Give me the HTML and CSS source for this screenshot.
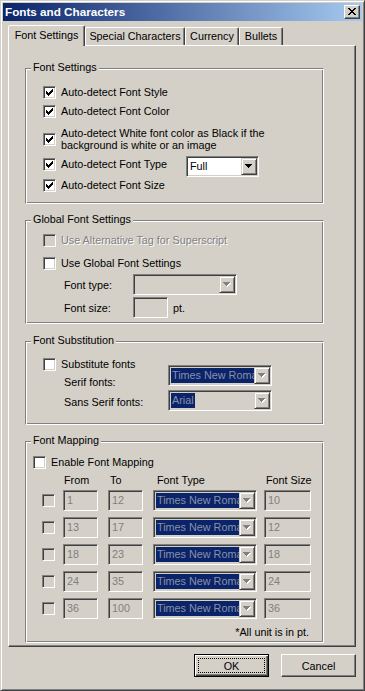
FILE: index.html
```html
<!DOCTYPE html>
<html>
<head>
<meta charset="utf-8">
<title>Fonts and Characters</title>
<link rel="stylesheet" href="styles.css">
</head>
<body>
<div class="window">
  <div class="titlebar">
    <span class="title">Fonts and Characters</span>
    <span class="caption-btn"><svg width="8" height="7" viewBox="0 0 8 7"><path d="M0 0h2v1H0zM6 0h2v1H6zM1 1h2v1H1zM5 1h2v1H5zM2 2h4v1H2zM3 3h2v1H3zM2 4h4v1H2zM1 5h2v1H1zM5 5h2v1H5zM0 6h2v1H0zM6 6h2v1H6z" fill="#000"/></svg></span>
  </div>

  <div class="tabs">
    <div class="tab active tab-a">Font Settings</div>
    <div class="tab tab-b">Special Characters</div>
    <div class="tab tab-c">Currency</div>
    <div class="tab tab-d">Bullets</div>
  </div>

  <div class="panel">
    <!-- Font Settings -->
    <div class="group g1">
      <span class="group-title">Font Settings</span>
      <div class="check-row">
        <span class="cb"><svg width="7" height="7" viewBox="0 0 7 7"><path d="M6 0h1v1H6zM5 1h2v1H5zM0 2h1v1H0zM4 2h3v1H4zM0 3h2v1H0zM3 3h3v1H3zM0 4h5v1H0zM1 5h3v1H1zM2 6h1v1H2z" fill="#000"/></svg></span>
        <span>Auto-detect Font Style</span>
      </div>
      <div class="check-row g1-r2">
        <span class="cb"><svg width="7" height="7" viewBox="0 0 7 7"><path d="M6 0h1v1H6zM5 1h2v1H5zM0 2h1v1H0zM4 2h3v1H4zM0 3h2v1H0zM3 3h3v1H3zM0 4h5v1H0zM1 5h3v1H1zM2 6h1v1H2z" fill="#000"/></svg></span>
        <span>Auto-detect Font Color</span>
      </div>
      <div class="check-row g1-r3">
        <span class="cb"><svg width="7" height="7" viewBox="0 0 7 7"><path d="M6 0h1v1H6zM5 1h2v1H5zM0 2h1v1H0zM4 2h3v1H4zM0 3h2v1H0zM3 3h3v1H3zM0 4h5v1H0zM1 5h3v1H1zM2 6h1v1H2z" fill="#000"/></svg></span>
        <span class="two-line">Auto-detect White font color as Black if the<br>background is white or an image</span>
      </div>
      <div class="check-row g1-r4">
        <span class="cb"><svg width="7" height="7" viewBox="0 0 7 7"><path d="M6 0h1v1H6zM5 1h2v1H5zM0 2h1v1H0zM4 2h3v1H4zM0 3h2v1H0zM3 3h3v1H3zM0 4h5v1H0zM1 5h3v1H1zM2 6h1v1H2z" fill="#000"/></svg></span>
        <span class="type-label">Auto-detect Font Type</span>
        <div class="combo combo-full">
          <span class="combo-val plain">Full</span>
          <span class="combo-btn"><svg width="7" height="4" viewBox="0 0 7 4"><path d="M0 0h7v1H0zM1 1h5v1H1zM2 2h3v1H2zM3 3h1v1H3z" fill="#000"/></svg></span>
        </div>
      </div>
      <div class="check-row g1-r5">
        <span class="cb"><svg width="7" height="7" viewBox="0 0 7 7"><path d="M6 0h1v1H6zM5 1h2v1H5zM0 2h1v1H0zM4 2h3v1H4zM0 3h2v1H0zM3 3h3v1H3zM0 4h5v1H0zM1 5h3v1H1zM2 6h1v1H2z" fill="#000"/></svg></span>
        <span>Auto-detect Font Size</span>
      </div>
    </div>

    <!-- Global Font Settings -->
    <div class="group g2">
      <span class="group-title">Global Font Settings</span>
      <div class="check-row">
        <span class="cb disabled"></span>
        <span class="dis-text">Use Alternative Tag for Superscript</span>
      </div>
      <div class="check-row g2-r2">
        <span class="cb"></span>
        <span>Use Global Font Settings</span>
      </div>
      <div class="field-row g2-r3">
        <span class="field-label">Font type:</span>
        <div class="combo combo-type disabled">
          <span class="combo-val"></span>
          <span class="combo-btn"><svg width="8" height="5" viewBox="0 0 8 5"><path d="M1 1h7v1H1zM2 2h5v1H2zM3 3h3v1H3zM4 4h1v1H4z" fill="#fff"/><path d="M0 0h7v1H0zM1 1h5v1H1zM2 2h3v1H2zM3 3h1v1H3z" fill="#808080"/></svg></span>
        </div>
      </div>
      <div class="field-row g2-r4">
        <span class="field-label">Font size:</span>
        <span class="field w-size2"></span>
        <span class="pt">pt.</span>
      </div>
    </div>

    <!-- Font Substitution -->
    <div class="group g3">
      <span class="group-title">Font Substitution</span>
      <div class="sub-wrap">
        <div class="sub-left">
          <div class="check-row flush">
            <span class="cb"></span>
            <span>Substitute fonts</span>
          </div>
          <div class="sub-label l1">Serif fonts:</div>
          <div class="sub-label l2">Sans Serif fonts:</div>
        </div>
        <div class="sub-right">
          <div class="combo combo-sub s1 disabled">
            <span class="combo-val"><span class="sel">Times New Roman</span></span>
            <span class="combo-btn"><svg width="8" height="5" viewBox="0 0 8 5"><path d="M1 1h7v1H1zM2 2h5v1H2zM3 3h3v1H3zM4 4h1v1H4z" fill="#fff"/><path d="M0 0h7v1H0zM1 1h5v1H1zM2 2h3v1H2zM3 3h1v1H3z" fill="#808080"/></svg></span>
          </div>
          <div class="combo combo-sub s2 disabled">
            <span class="combo-val"><span class="sel">Arial</span></span>
            <span class="combo-btn"><svg width="8" height="5" viewBox="0 0 8 5"><path d="M1 1h7v1H1zM2 2h5v1H2zM3 3h3v1H3zM4 4h1v1H4z" fill="#fff"/><path d="M0 0h7v1H0zM1 1h5v1H1zM2 2h3v1H2zM3 3h1v1H3z" fill="#808080"/></svg></span>
          </div>
        </div>
      </div>
    </div>

    <!-- Font Mapping -->
    <div class="group g4">
      <span class="group-title">Font Mapping</span>
      <div class="check-row g4-enable">
        <span class="cb"></span>
        <span>Enable Font Mapping</span>
      </div>
      <div class="map-grid map-head">
        <span></span>
        <span class="h-from">From</span>
        <span class="h-to">To</span>
        <span class="h-type">Font Type</span>
        <span class="h-size">Font Size</span>
      </div>
      <div class="map-grid map-body">
        <span class="cb disabled"></span>
        <span class="field w-num">1</span>
        <span class="field w-num">12</span>
        <div class="combo combo-map disabled"><span class="combo-val"><span class="sel">Times New Roman</span></span><span class="combo-btn"><svg width="8" height="5" viewBox="0 0 8 5"><path d="M1 1h7v1H1zM2 2h5v1H2zM3 3h3v1H3zM4 4h1v1H4z" fill="#fff"/><path d="M0 0h7v1H0zM1 1h5v1H1zM2 2h3v1H2zM3 3h1v1H3z" fill="#808080"/></svg></span></div>
        <span class="field w-size">10</span>

        <span class="cb disabled"></span>
        <span class="field w-num">13</span>
        <span class="field w-num">17</span>
        <div class="combo combo-map disabled"><span class="combo-val"><span class="sel">Times New Roman</span></span><span class="combo-btn"><svg width="8" height="5" viewBox="0 0 8 5"><path d="M1 1h7v1H1zM2 2h5v1H2zM3 3h3v1H3zM4 4h1v1H4z" fill="#fff"/><path d="M0 0h7v1H0zM1 1h5v1H1zM2 2h3v1H2zM3 3h1v1H3z" fill="#808080"/></svg></span></div>
        <span class="field w-size">12</span>

        <span class="cb disabled"></span>
        <span class="field w-num">18</span>
        <span class="field w-num">23</span>
        <div class="combo combo-map disabled"><span class="combo-val"><span class="sel">Times New Roman</span></span><span class="combo-btn"><svg width="8" height="5" viewBox="0 0 8 5"><path d="M1 1h7v1H1zM2 2h5v1H2zM3 3h3v1H3zM4 4h1v1H4z" fill="#fff"/><path d="M0 0h7v1H0zM1 1h5v1H1zM2 2h3v1H2zM3 3h1v1H3z" fill="#808080"/></svg></span></div>
        <span class="field w-size">18</span>

        <span class="cb disabled"></span>
        <span class="field w-num">24</span>
        <span class="field w-num">35</span>
        <div class="combo combo-map disabled"><span class="combo-val"><span class="sel">Times New Roman</span></span><span class="combo-btn"><svg width="8" height="5" viewBox="0 0 8 5"><path d="M1 1h7v1H1zM2 2h5v1H2zM3 3h3v1H3zM4 4h1v1H4z" fill="#fff"/><path d="M0 0h7v1H0zM1 1h5v1H1zM2 2h3v1H2zM3 3h1v1H3z" fill="#808080"/></svg></span></div>
        <span class="field w-size">24</span>

        <span class="cb disabled"></span>
        <span class="field w-num">36</span>
        <span class="field w-num">100</span>
        <div class="combo combo-map disabled"><span class="combo-val"><span class="sel">Times New Roman</span></span><span class="combo-btn"><svg width="8" height="5" viewBox="0 0 8 5"><path d="M1 1h7v1H1zM2 2h5v1H2zM3 3h3v1H3zM4 4h1v1H4z" fill="#fff"/><path d="M0 0h7v1H0zM1 1h5v1H1zM2 2h3v1H2zM3 3h1v1H3z" fill="#808080"/></svg></span></div>
        <span class="field w-size">36</span>
      </div>
      <div class="note">*All unit is in pt.</div>
    </div>
  </div>

  <div class="buttons">
    <button class="btn default"><span class="focus">OK</span></button>
    <button class="btn">Cancel</button>
  </div>
</div>
</body>
</html>
```

FILE: styles.css
```css
* { box-sizing: border-box; }
html, body { margin: 0; padding: 0; }
body {
  background: #d4d0c8;
  font-family: "Liberation Sans", Arial, sans-serif;
  font-size: 10.8px;
  color: #000;
}

/* window frame */
.window {
  width: 365px;
  height: 691px;
  background: #d4d0c8;
  border: 1px solid;
  border-color: #d4d0c8 #404040 #404040 #d4d0c8;
  box-shadow: inset 1px 1px #fff, inset -1px -1px #808080;
  padding: 2px;
  display: flex;
  flex-direction: column;
}

.titlebar {
  height: 18px;
  flex: none;
  background: linear-gradient(to right, #0a246a, #a6caf0);
  display: flex;
  align-items: center;
  justify-content: space-between;
  padding: 0 2px 0 2px;
}
.title {
  color: #fff;
  font-weight: bold;
  font-size: 11.7px;
  line-height: 18px;
}
.caption-btn {
  width: 16px;
  height: 14px;
  background: #d4d0c8;
  border: 1px solid;
  border-color: #fff #404040 #404040 #fff;
  box-shadow: inset -1px -1px #808080;
}
.caption-btn svg { display: block; margin: 2px 0 0 3px; }

/* tabs */
.tabs {
  display: flex;
  align-items: flex-end;
  height: 24px;
  flex: none;
  padding-left: 5px;
}
.tab {
  height: 18px;
  border: 1px solid;
  border-bottom: 0;
  border-color: #fff #404040 transparent #fff;
  box-shadow: inset -1px 0 #808080;
  border-radius: 2px 2px 0 0;
  text-align: center;
  line-height: 16px;
  white-space: nowrap;
}
.tab.active {
  height: 21px;
  margin-bottom: -1px;
  position: relative;
  z-index: 1;
  background: #d4d0c8;
  line-height: 18px;
}
.tab-a { width: 77px; }
.tab-b { width: 100px; }
.tab-c { width: 54px; }
.tab-d { width: 44px; }

/* panel */
.panel {
  flex: none;
  margin-left: 5px;
  width: 348px;
  height: 602px;
  border: 1px solid;
  border-color: #fff #404040 #404040 #fff;
  box-shadow: inset -1px -1px #808080;
  padding-left: 16px;
}

/* group boxes */
.group {
  position: relative;
  width: 299px;
  border: 1px solid;
  border-color: #808080 #fff #fff #808080;
  box-shadow: inset 1px 1px #fff, inset -1px -1px #808080;
}
.group-title {
  position: absolute;
  top: -8px;
  left: 5px;
  padding: 0 2px;
  background: #d4d0c8;
  line-height: 13px;
  white-space: nowrap;
}
.g1 { margin-top: 22px; padding: 17px 0 11px 0; }
.g2 { margin-top: 16px; padding: 13px 0 5px 0; }
.g3 { margin-top: 17px; padding: 16px 0 13px 0; }
.g4 { margin-top: 16px; padding: 14px 0 3px 0; }

/* check rows */
.check-row {
  display: flex;
  align-items: center;
  gap: 5px;
  margin-left: 17px;
  line-height: 13px;
  white-space: nowrap;
}
.check-row.flush { margin-left: 0; }
.g1-r2 { margin-top: 6px; }
.g1-r3 { margin-top: 9px; }
.g1-r4 { margin-top: 6px; align-items: flex-start; }
.g1-r4 .cb { margin-top: 1px; }
.g1-r4 .type-label { margin-top: 1px; width: 120px; }
.g1-r5 { margin-top: 2px; }
.two-line { line-height: 12px; }

.cb {
  flex: none;
  width: 13px;
  height: 13px;
  background: #fff;
  border: 1px solid;
  border-color: #808080 #fff #fff #808080;
  box-shadow: inset 1px 1px #404040, inset -1px -1px #d4d0c8;
}
.cb svg { display: block; margin: 2px 0 0 2px; }
.cb.disabled { background: #d4d0c8; }

.dis-text { color: #808080; text-shadow: 1px 1px #fff; }

/* sunken fields */
.field {
  display: block;
  height: 21px;
  background: #d4d0c8;
  color: #808080;
  border: 1px solid;
  border-color: #808080 #fff #fff #808080;
  box-shadow: inset 1px 1px #404040, inset -1px -1px #d4d0c8;
  padding-left: 3px;
  line-height: 18px;
}
.w-num { width: 35px; }
.w-size { width: 47px; }
.w-size2 { width: 35px; }

/* combo boxes */
.combo {
  display: flex;
  height: 21px;
  padding: 1px;
  background: #fff;
  border: 1px solid;
  border-color: #808080 #fff #fff #808080;
  box-shadow: inset 1px 1px #404040, inset -1px -1px #d4d0c8;
  flex: none;
}
.combo.disabled { background: #d4d0c8; }
.combo-val {
  flex: 1;
  min-width: 0;
  overflow: hidden;
  white-space: nowrap;
  padding: 1px;
  line-height: 15px;
}
.combo-val.plain { padding-left: 2px; }
.sel {
  display: inline-block;
  background: #0a246a;
  color: #8c8fa8;
  height: 15px;
  padding: 0 1px;
  line-height: 15px;
}
.combo-btn {
  flex: none;
  width: 16px;
  height: 17px;
  background: #d4d0c8;
  border: 1px solid;
  border-color: #d4d0c8 #404040 #404040 #d4d0c8;
  box-shadow: inset 1px 1px #fff, inset -1px -1px #808080;
}
.combo-btn svg { display: block; margin: 5px 0 0 3px; }

.combo-full { width: 73px; margin-top: -1px; }
.combo-type { width: 104px; }
.combo-sub { width: 104px; }
.combo-map { width: 104px; }

/* global font rows */
.field-row {
  display: flex;
  align-items: center;
  margin-left: 38px;
  white-space: nowrap;
}
.field-label { width: 69px; }
.g2-r2 { margin-top: 10px; }
.g2-r3 { margin-top: 4px; }
.g2-r4 { margin-top: 2px; }
.pt { margin-left: 5px; }

/* substitution */
.sub-wrap { display: flex; margin-left: 17px; }
.sub-left { width: 125px; display: flex; flex-direction: column; }
.sub-label { margin-left: 21px; line-height: 13px; white-space: nowrap; }
.sub-label.l1 { margin-top: 5px; }
.sub-label.l2 { margin-top: 7px; }
.sub-right { display: flex; flex-direction: column; }
.s1 { margin-top: 7px; }
.s2 { margin-top: 4px; }

/* mapping */
.g4-enable { margin-left: 7px; }
.map-grid {
  display: grid;
  grid-template-columns: 21px 45px 45px 111px 47px;
  margin-left: 16px;
  align-items: center;
}
.map-head { margin-top: 5px; line-height: 13px; white-space: nowrap; }
.h-from { padding-left: 1px; }
.h-to { padding-left: 2px; }
.h-type { padding-left: 4px; }
.h-size { padding-left: 2px; }
.map-body { margin-top: 3px; row-gap: 6px; }
.note {
  margin-top: 7px;
  text-align: right;
  padding-right: 14px;
  line-height: 13px;
}

/* buttons */
.buttons {
  display: flex;
  justify-content: flex-end;
  gap: 12px;
  padding-right: 6px;
  margin-top: 7px;
}
.btn {
  width: 75px;
  height: 23px;
  padding: 0;
  font: inherit;
  color: #000;
  background: #d4d0c8;
  border: 1px solid;
  border-color: #fff #404040 #404040 #fff;
  box-shadow: inset -1px -1px #808080;
  border-radius: 0;
}
.btn.default {
  border-color: #000;
  box-shadow: inset 1px 1px #fff, inset -1px -1px #404040, inset -2px -2px #808080;
  display: flex;
  padding: 3px;
}
.focus {
  flex: 1;
  border: 1px dotted #000;
  display: flex;
  align-items: center;
  justify-content: center;
}
```
